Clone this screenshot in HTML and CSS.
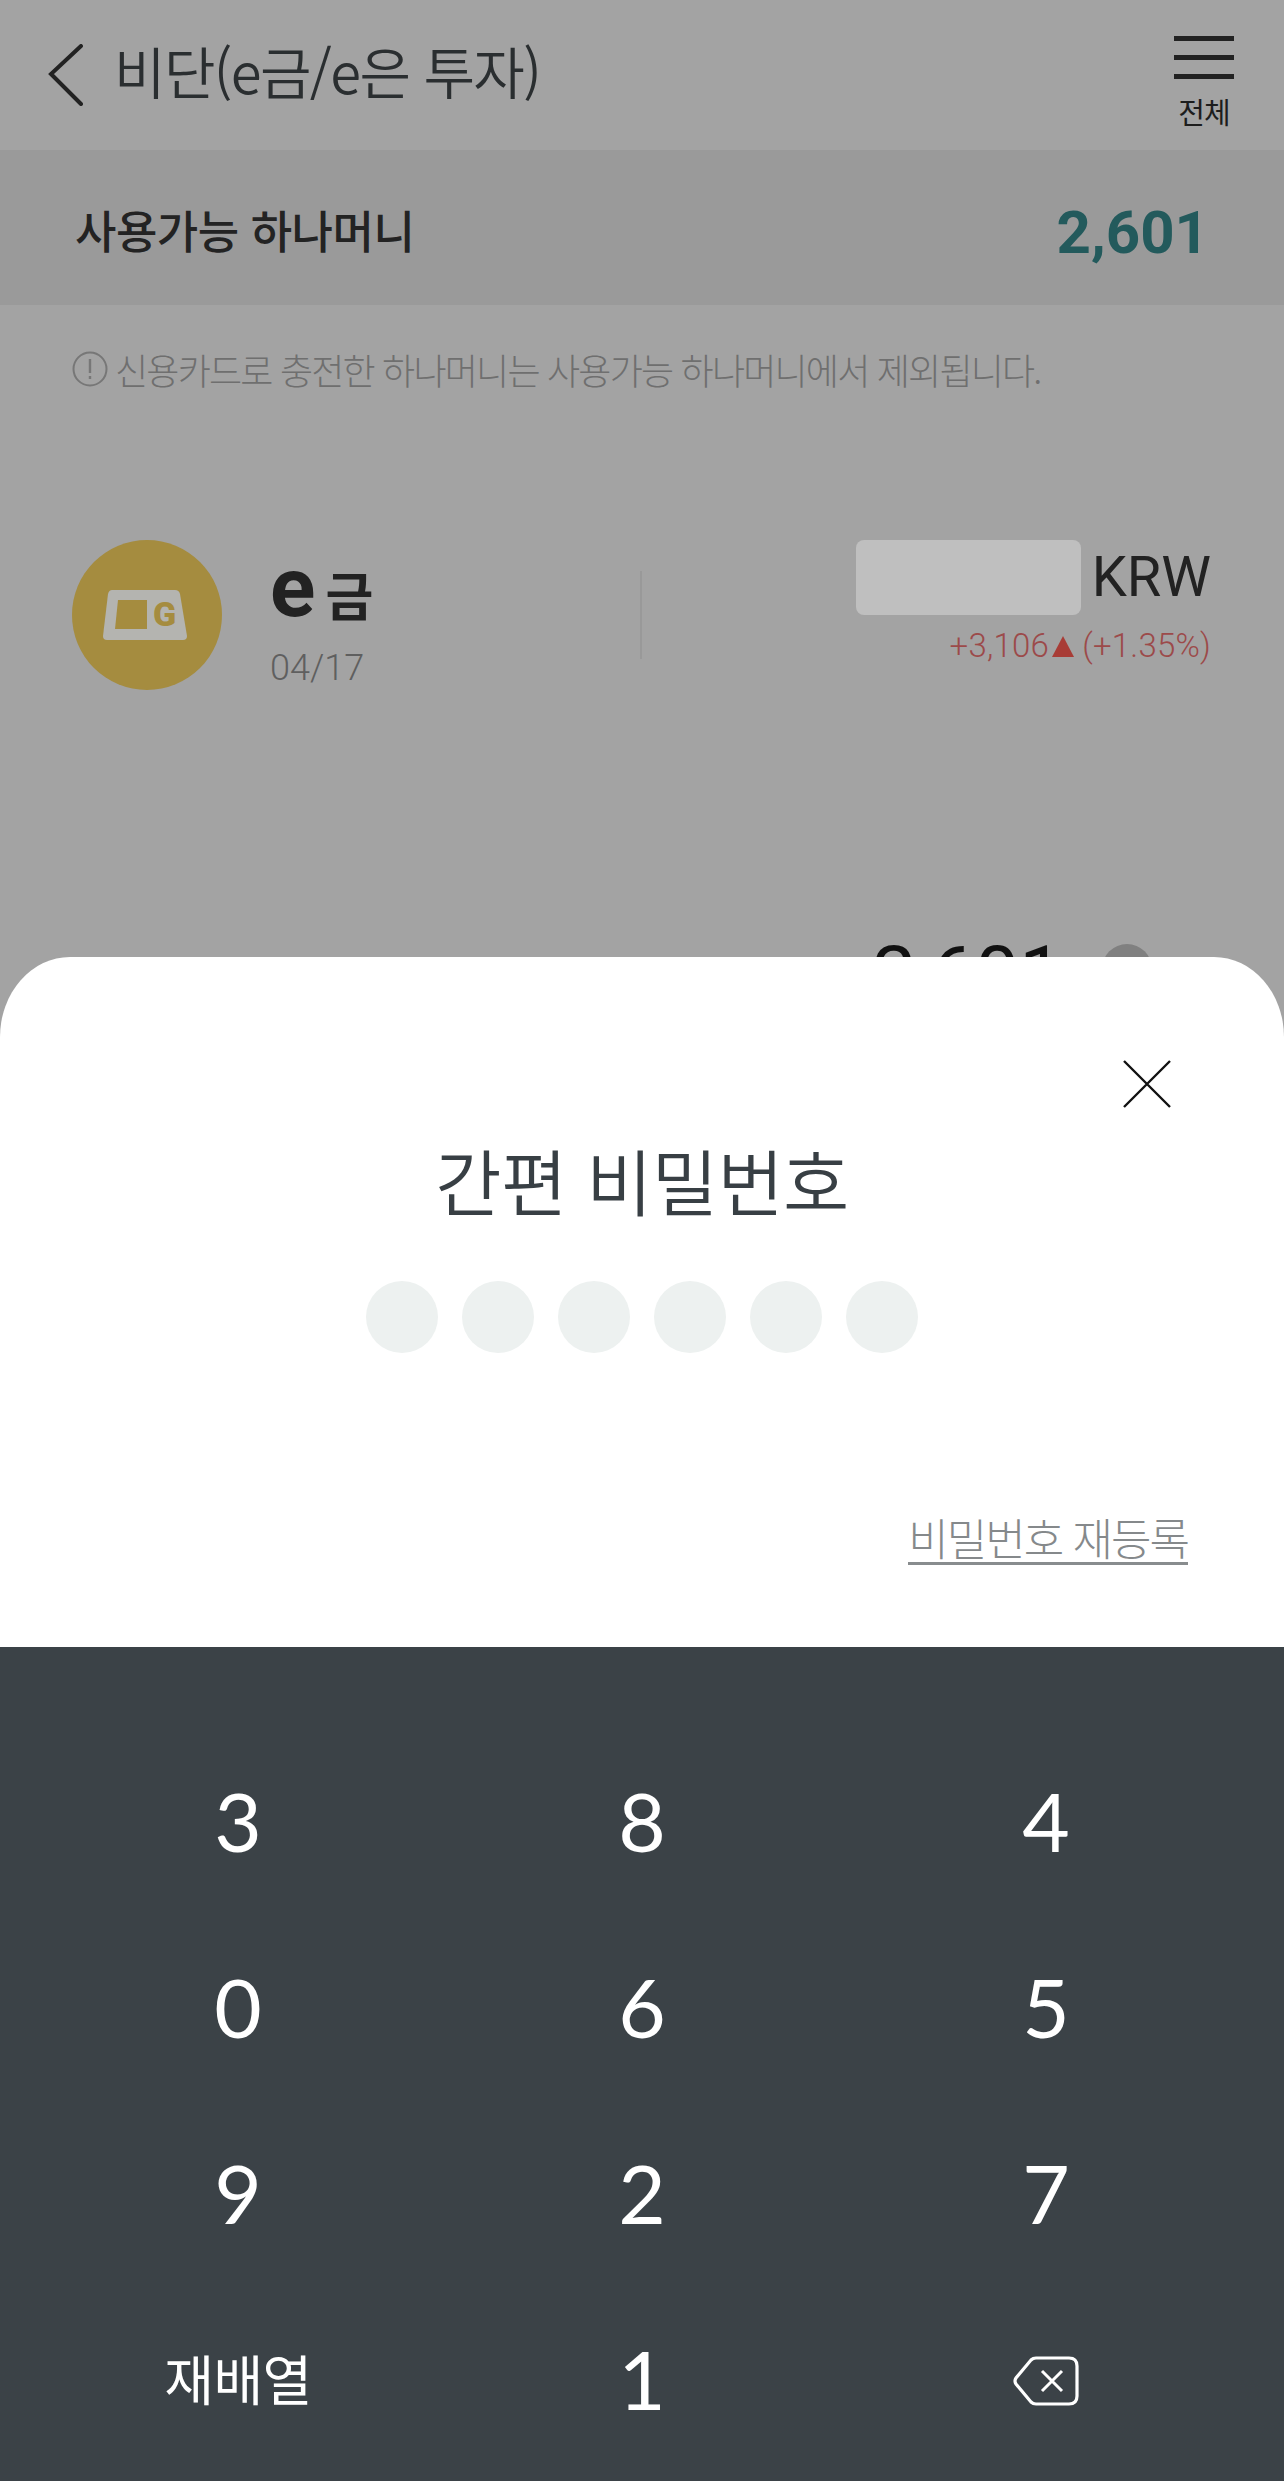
FILE: index.html
```html
<!DOCTYPE html>
<html lang="ko">
<head>
    <meta charset="UTF-8">
    <meta name="viewport" content="width=device-width, initial-scale=1.0">
    <title>간편 비밀번호</title>
    <link rel="stylesheet" href="styles.css">
</head>
<body>
    <div class="screen">
        <header class="topbar">
            <svg class="back" width="36" height="62" viewBox="0 0 36 62"><path d="M33 2 L3 30 L33 60" fill="none" stroke="#222" stroke-width="4" stroke-linecap="round"/></svg>
            <h1 class="topbar-title">비단(e금/e은 투자)</h1>
            <div class="menu">
                <div class="menu-lines"><span></span><span></span><span></span></div>
                <div class="menu-label">전체</div>
            </div>
        </header>

        <div class="balance">
            <span class="balance-label">사용가능 하나머니</span>
            <span class="balance-value">2,601</span>
        </div>

        <div class="note">
            <svg width="36" height="36" viewBox="0 0 36 36"><circle cx="18" cy="18" r="16.5" fill="none" stroke="#777" stroke-width="2"/><path d="M18 8 V22 M18 25 V28" stroke="#777" stroke-width="2.4" fill="none"/></svg>
            <span>신용카드로 충전한 하나머니는 사용가능 하나머니에서 제외됩니다.</span>
        </div>

        <div class="asset">
            <svg class="coin" width="150" height="150" viewBox="0 0 150 150">
                <circle cx="75" cy="75" r="75" fill="#a58c3f"/>
                <path d="M40 50 H103 Q107 50 108 54 L115 96 Q115 100 111 100 H35 Q31 100 31 96 L36 54 Q37 50 40 50 Z" fill="#b4b4b0"/>
                <path d="M46 60 H75 V89 H43 Z" fill="#a58c3f"/>
                <text x="81" y="86" class="coin-letter">G</text>
            </svg>
            <div class="asset-name">
                <div class="asset-title"><span class="asset-e">e</span><span class="asset-kr">금</span></div>
                <div class="asset-date">04/17</div>
            </div>
            <div class="asset-divider"></div>
            <div class="asset-price">
                <div class="price-main"><span class="price-mask"></span><span class="price-unit">KRW</span></div>
                <div class="price-change">+3,106<span class="price-arrow"></span> (+1.35%)</div>
            </div>
        </div>

        <div class="peek">
            <span class="peek-value">2,601</span>
            <span class="peek-dot"></span>
        </div>

        <div class="sheet">
            <div class="sheet-top">
                <div class="sheet-close">
                    <svg width="48" height="48" viewBox="0 0 48 48"><path d="M1 1 L47 47 M47 1 L1 47" stroke="#111" stroke-width="2.4" fill="none"/></svg>
                </div>
                <h2 class="sheet-title">간편 비밀번호</h2>
                <div class="dots">
                    <span></span><span></span><span></span><span></span><span></span><span></span>
                </div>
                <div class="reset"><a class="reset-link">비밀번호 재등록</a></div>
            </div>
            <div class="keypad">
                <div class="key">3</div>
                <div class="key">8</div>
                <div class="key">4</div>
                <div class="key">0</div>
                <div class="key">6</div>
                <div class="key">5</div>
                <div class="key">9</div>
                <div class="key">2</div>
                <div class="key">7</div>
                <div class="key key-text">재배열</div>
                <div class="key">1</div>
                <div class="key key-icon">
                    <svg width="68" height="52" viewBox="0 0 68 52"><path d="M24 3 H57 Q65 3 65 11 V41 Q65 49 57 49 H24 Q21 49 19 47 L4 29 Q2 26 4 23 L19 5 Q21 3 24 3 Z" fill="none" stroke="#fff" stroke-width="3.2"/><path d="M30 16 L50 36 M50 16 L30 36" stroke="#fff" stroke-width="3" fill="none"/></svg>
                </div>
            </div>
        </div>
    </div>
</body>
</html>
```

FILE: styles.css
```css
* {
    box-sizing: border-box;
}

body {
    margin: 0;
    font-family: "Noto Sans CJK KR", "Noto Sans", sans-serif;
    background: #a3a3a3;
}

.screen {
    position: relative;
    width: 1284px;
    height: 2481px;
    overflow: hidden;
    background: #a3a3a3;
}

.topbar {
    display: flex;
    align-items: center;
    height: 150px;
    padding: 0 50px 0 48px;
}

.back {
    flex: none;
    margin-right: 30px;
}

.topbar-title {
    flex: 1;
    margin: 0 0 12px;
    font-size: 56px;
    font-weight: 350;
    letter-spacing: -1.6px;
    color: #2a2e30;
}

.menu {
    width: 60px;
    margin-top: 14px;
}

.menu-lines span {
    display: block;
    height: 5px;
    margin-bottom: 14px;
    background: #222;
}

.menu-label {
    font-size: 29px;
    line-height: 36px;
    letter-spacing: -1px;
    text-align: center;
    white-space: nowrap;
    color: #1d1d1d;
}

.balance {
    display: flex;
    justify-content: space-between;
    align-items: center;
    height: 155px;
    padding: 4px 75px 0 75px;
    background: #9a9a9a;
}

.balance-label {
    font-size: 45px;
    font-weight: 500;
    letter-spacing: -0.5px;
    color: #232323;
}

.balance-value {
    margin-top: 6px;
    font-family: Roboto, sans-serif;
    font-size: 60px;
    font-weight: 700;
    color: #235a5c;
}

.note {
    display: flex;
    align-items: center;
    gap: 7px;
    height: 128px;
    padding: 0 72px;
    font-size: 36px;
    font-weight: 300;
    letter-spacing: -1.8px;
    color: #6f6f6f;
}

.asset {
    display: flex;
    align-items: center;
    height: 150px;
    margin-top: 107px;
    padding: 0 73px 0 72px;
}

.coin {
    flex: none;
}

.coin-letter {
    font-family: Roboto, sans-serif;
    font-size: 34px;
    font-weight: 900;
    fill: #a58c3f;
}

.asset-name {
    width: 418px;
    padding: 5px 0 0 48px;
}

.asset-title {
    display: flex;
    align-items: baseline;
    height: 84px;
    color: #222;
}

.asset-e {
    font-family: Roboto, sans-serif;
    font-size: 84px;
    font-weight: 700;
    line-height: 84px;
}

.asset-kr {
    margin-left: 10px;
    font-size: 52px;
    font-weight: 700;
    line-height: 84px;
}

.asset-date {
    margin-top: 17px;
    font-family: Roboto, sans-serif;
    font-size: 36px;
    font-weight: 300;
    color: #5f5f5f;
}

.asset-divider {
    flex: none;
    width: 2px;
    height: 88px;
    background: #999;
}

.asset-price {
    flex: 1;
    margin-bottom: 26px;
    text-align: right;
}

.price-main {
    display: flex;
    justify-content: flex-end;
    align-items: center;
    gap: 11px;
}

.price-mask {
    width: 225px;
    height: 75px;
    border-radius: 8px;
    background: #bfbfbf;
}

.price-unit {
    font-family: Roboto, sans-serif;
    font-size: 56px;
    font-weight: 400;
    color: #222;
}

.price-change {
    margin-top: 11px;
    font-family: Roboto, sans-serif;
    font-size: 33px;
    font-weight: 300;
    letter-spacing: 0.2px;
    color: #9c4a4a;
}

.price-arrow {
    display: inline-block;
    margin-left: 3px;
    border-left: 11px solid transparent;
    border-right: 11px solid transparent;
    border-bottom: 21px solid #a83c36;
}

.peek {
    display: flex;
    justify-content: flex-end;
    align-items: center;
    gap: 39px;
    margin-top: 233px;
    padding-right: 132px;
}

.peek-value {
    margin-top: 6px;
    font-family: Roboto, sans-serif;
    font-size: 78px;
    color: #111;
}

.peek-dot {
    width: 50px;
    height: 50px;
    margin-bottom: 6px;
    border-radius: 50%;
    background: #808080;
}

/* bottom sheet sits over the dimmed page */
.sheet {
    position: absolute;
    left: 0;
    right: 0;
    bottom: 0;
    height: 1524px;
    border-radius: 70px 70px 0 0 / 80px 80px 0 0;
    overflow: hidden;
    background: #fff;
}

.sheet-top {
    height: 690px;
    padding-top: 103px;
}

.sheet-close {
    display: flex;
    justify-content: flex-end;
    height: 48px;
    padding-right: 113px;
}

.sheet-title {
    margin: 23px 0 0;
    font-size: 72px;
    font-weight: 350;
    line-height: 96px;
    letter-spacing: -0.6px;
    text-align: center;
    color: #383f44;
}

.dots {
    display: flex;
    justify-content: center;
    gap: 24px;
    margin-top: 54px;
}

.dots span {
    width: 72px;
    height: 72px;
    border-radius: 50%;
    background: #edf1f0;
}

.reset {
    display: flex;
    justify-content: flex-end;
    margin-top: 149px;
    padding-right: 96px;
}

.reset-link {
    padding-top: 10px;
    font-size: 44px;
    font-weight: 300;
    line-height: 50px;
    letter-spacing: -2px;
    border-bottom: 3px solid #888c8e;
    color: #85898b;
}

.keypad {
    display: grid;
    grid-template-columns: repeat(3, 404px);
    grid-auto-rows: 186px;
    height: 834px;
    padding: 84px 36px 0;
    background: #3b4247;
}

.key {
    display: flex;
    justify-content: center;
    align-items: center;
    padding-bottom: 8px;
    font-family: Lato, sans-serif;
    font-size: 82px;
    font-weight: 400;
    color: #fff;
}

.key-text {
    padding-bottom: 10px;
    font-family: "Noto Sans CJK KR", sans-serif;
    font-size: 54px;
    font-weight: 400;
    letter-spacing: -0.5px;
}

.key-icon {
    padding-bottom: 2px;
}
```
